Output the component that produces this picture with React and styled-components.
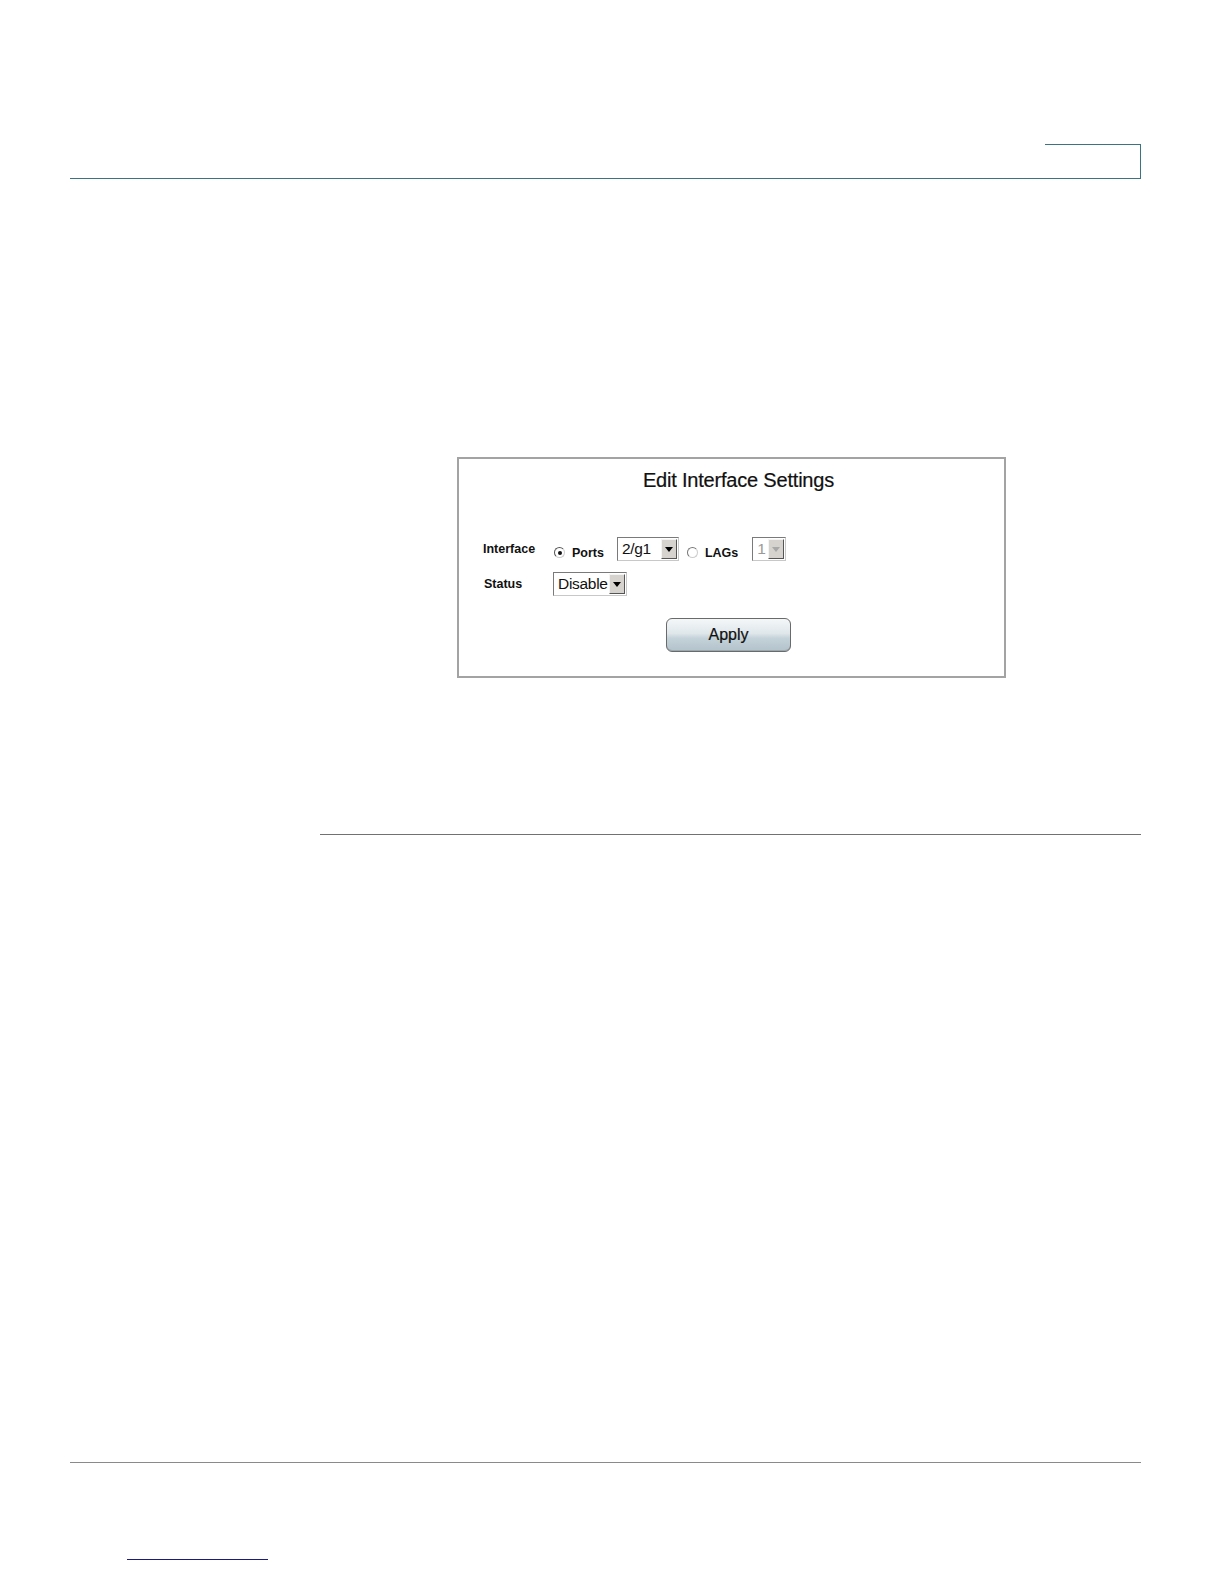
import React from 'react';
import styled, { createGlobalStyle } from 'styled-components';

const GlobalStyle = createGlobalStyle`
    html, body {
        margin: 0;
        padding: 0;
        background: #ffffff;
        font-family: "Liberation Sans", Arial, sans-serif;
    }
`;

const Page = styled.div`
    width: 1224px;
    height: 1584px;
    overflow: hidden;
    background: #ffffff;
    display: flex;
    flex-direction: column;
`;

const Header = styled.div`
    margin: 144px 0 0 70px;
    width: 1071px;
    display: flex;
    justify-content: flex-end;
    border-bottom: 1px solid #3b7480;
`;

const Tab = styled.div`
    box-sizing: border-box;
    width: 96px;
    height: 34px;
    border-top: 1px solid #3b7480;
    border-right: 1px solid #3b7480;
`;

const Shot = styled.div`
    box-sizing: border-box;
    margin: 278px 0 0 457px;
    width: 549px;
    height: 221px;
    border: 2px solid #a3a3a3;
    padding: 9px 24px 0 24px;
    display: flex;
    flex-direction: column;
`;

const Title = styled.div`
    font-size: 20px;
    line-height: 24px;
    color: #111;
    text-align: center;
    padding-left: 14px;
    letter-spacing: -0.2px;
    -webkit-text-stroke: 0.2px #111;
`;

const Form = styled.div`
    margin-top: 45px;
    display: grid;
    grid-template-columns: 70px auto;
    row-gap: 11px;
    align-items: center;
`;

const Label = styled.div`
    font-size: 12.5px;
    font-weight: bold;
    color: #111;
    padding-left: ${p => p.$indent || 0}px;
`;

const Controls = styled.div`
    display: flex;
    align-items: center;
    height: 24px;
`;

const Radio = styled.span`
    box-sizing: border-box;
    width: 11px;
    height: 11px;
    border-radius: 50%;
    border: 1px solid ${p => (p.$on ? '#555' : '#777')};
    border-right-color: #ccc;
    border-bottom-color: #ccc;
    margin: 7px 7px 0 ${p => p.$ml || 0}px;
    display: flex;
    align-items: center;
    justify-content: center;
    &::after {
        content: '';
        width: 4px;
        height: 4px;
        border-radius: 50%;
        background: ${p => (p.$on ? '#111' : 'transparent')};
    }
`;

const Option = styled.span`
    font-size: 12.5px;
    font-weight: bold;
    color: #111;
    padding-top: 7px;
    margin-right: ${p => p.$mr}px;
`;

const Select = styled.span`
    box-sizing: border-box;
    width: ${p => p.$w}px;
    height: 24px;
    border: 1px solid #7a7a7a;
    border-right-color: #c8c8c8;
    border-bottom-color: #c8c8c8;
    background: #fff;
    display: flex;
    align-items: stretch;
    padding: 1px;
`;

const SelectText = styled.span`
    flex: 1;
    font-size: 15.5px;
    line-height: 20px;
    padding-left: 3px;
    letter-spacing: -0.3px;
    color: ${p => (p.$disabled ? '#9a9a9a' : '#111')};
`;

const Arrow = styled.span`
    box-sizing: border-box;
    width: 16px;
    background: #d6d3ce;
    border: 1px solid;
    border-color: #f4f4f4 #555 #555 #f4f4f4;
    display: flex;
    align-items: center;
    justify-content: center;
    &::after {
        content: '';
        width: 0;
        height: 0;
        border-left: 4px solid transparent;
        border-right: 4px solid transparent;
        border-top: 5px solid ${p => (p.$disabled ? '#a8a8a8' : '#000')};
    }
`;

const ButtonRow = styled.div`
    margin-top: 22px;
    display: flex;
    padding-left: 183px;
`;

const Button = styled.span`
    box-sizing: border-box;
    width: 125px;
    height: 34px;
    border: 1px solid #6a6a6a;
    border-radius: 6px;
    background: linear-gradient(#f4f7f8 0%, #dfe7eb 45%, #c4d2d9 60%, #b3c3cb 100%);
    box-shadow: inset 0 -1px 0 #9aa9b0;
    font-size: 16px;
    color: #111;
    -webkit-text-stroke: 0.2px #111;
    display: flex;
    align-items: center;
    justify-content: center;
`;

const Divider = styled.div`
    margin: ${p => p.$top}px 0 0 ${p => p.$left}px;
    width: ${p => p.$w}px;
    height: 1px;
    background: ${p => p.$color};
`;

const LinkLine = styled.div`
    margin: 96px 0 0 127px;
    width: 141px;
    height: 1px;
    background: #1a1a80;
`;

function Dropdown({ width, value, disabled }) {
    return (
        <Select $w={width}>
            <SelectText $disabled={disabled}>{value}</SelectText>
            <Arrow $disabled={disabled} />
        </Select>
    );
}

export default function App() {
    return (
        <Page>
            <GlobalStyle />
            <Header>
                <Tab />
            </Header>

            <Shot>
                <Title>Edit Interface Settings</Title>
                <Form>
                    <Label>Interface</Label>
                    <Controls>
                        <Radio $on $ml={1} />
                        <Option $mr={13}>Ports</Option>
                        <Dropdown width={62} value="2/g1" />
                        <Radio $ml={8} />
                        <Option $mr={14}>LAGs</Option>
                        <Dropdown width={34} value="1" disabled />
                    </Controls>

                    <Label $indent={1}>Status</Label>
                    <Controls>
                        <Dropdown width={74} value="Disable" />
                    </Controls>
                </Form>
                <ButtonRow>
                    <Button>Apply</Button>
                </ButtonRow>
            </Shot>

            <Divider $top={156} $left={320} $w={821} $color="#717171" />
            <Divider $top={627} $left={70} $w={1071} $color="#8a8a8a" />
            <LinkLine />
        </Page>
    );
}
